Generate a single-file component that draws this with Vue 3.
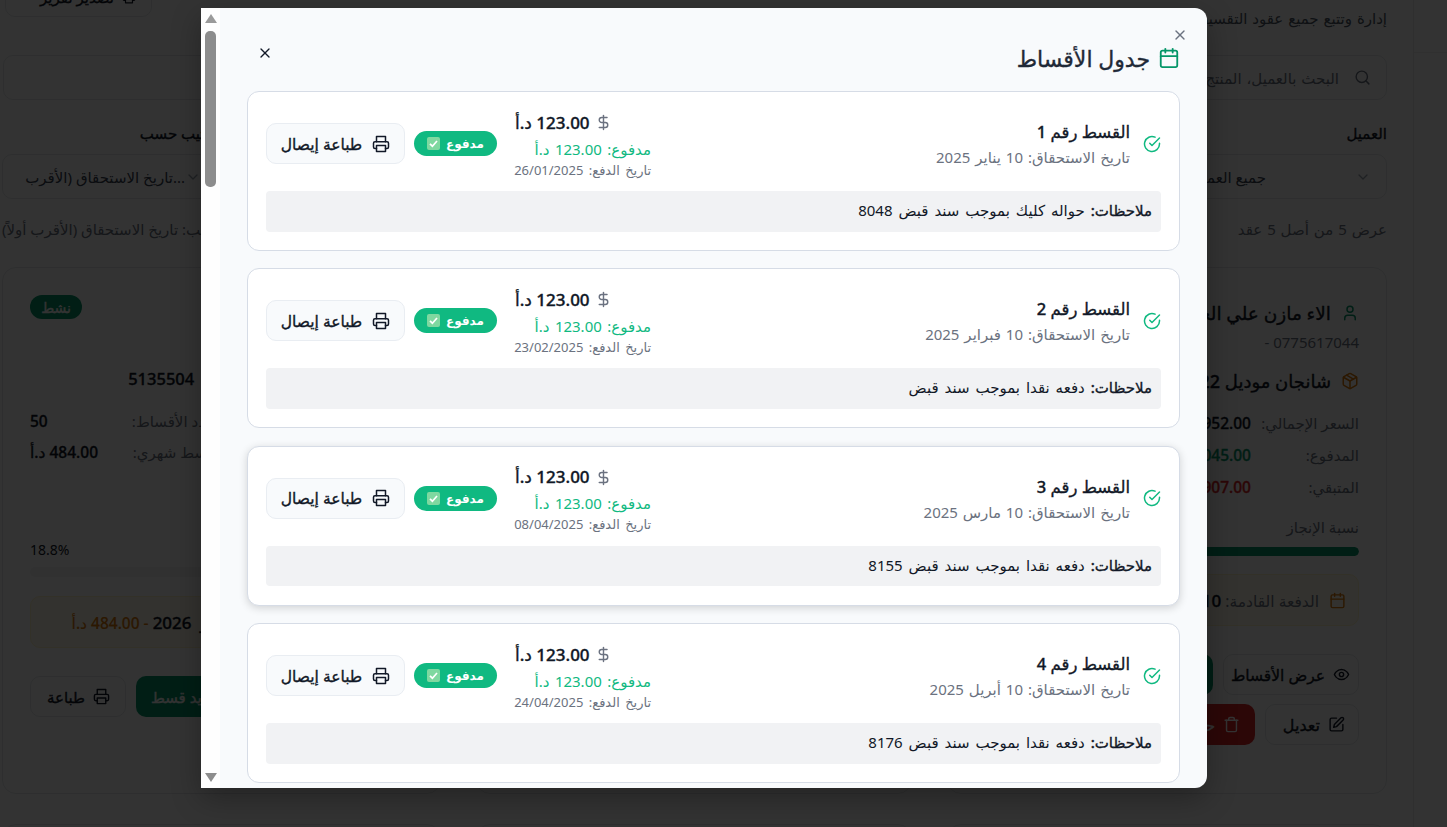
<script setup>
import { h } from 'vue'

const paths = {
  calendar: ['M8 2v4', 'M16 2v4', 'M5 4h14a2 2 0 0 1 2 2v14a2 2 0 0 1-2 2H5a2 2 0 0 1-2-2V6a2 2 0 0 1 2-2Z', 'M3 10h18'],
  check: ['M22 11.08V12a10 10 0 1 1-5.93-9.14', 'm9 11 3 3L22 4'],
  printer: ['M6 9V2h12v7', 'M6 18H4a2 2 0 0 1-2-2v-5a2 2 0 0 1 2-2h16a2 2 0 0 1 2 2v5a2 2 0 0 1-2 2h-2', 'M6 14h12v8H6Z'],
  x: ['M18 6 6 18', 'M6 6l12 12'],
  dollar: ['M12 2v20', 'M17 5H9.5a3.5 3.5 0 0 0 0 7h5a3.5 3.5 0 0 1 0 7H6'],
  search: ['M19 11a8 8 0 1 1-16 0 8 8 0 0 1 16 0Z', 'm21 21-4.3-4.3'],
  user: ['M19 21v-2a4 4 0 0 0-4-4H9a4 4 0 0 0-4 4v2', 'M16 7a4 4 0 1 1-8 0 4 4 0 0 1 8 0Z'],
  box: ['m7.5 4.27 9 5.15', 'M21 8a2 2 0 0 0-1-1.73l-7-4a2 2 0 0 0-2 0l-7 4A2 2 0 0 0 3 8v8a2 2 0 0 0 1 1.73l7 4a2 2 0 0 0 2 0l7-4A2 2 0 0 0 21 16Z', 'm3.3 7 8.7 5 8.7-5', 'M12 22V12'],
  eye: ['M2 12s3-7 10-7 10 7 10 7-3 7-10 7-10-7-10-7Z', 'M15 12a3 3 0 1 1-6 0 3 3 0 0 1 6 0Z'],
  edit: ['M12 3H5a2 2 0 0 0-2 2v14a2 2 0 0 0 2 2h14a2 2 0 0 0 2-2v-7', 'M18.375 2.625a2.121 2.121 0 1 1 3 3L12 15l-4 1 1-4Z'],
  trash: ['M3 6h18', 'M19 6v14c0 1-1 2-2 2H7c-1 0-2-1-2-2V6', 'M8 6V4c0-1 1-2 2-2h4c1 0 2 1 2 2v2'],
  chevron: ['m6 9 6 6 6-6'],
}
const Icon = (props) =>
  h('svg', {
    width: props.size || 16, height: props.size || 16, viewBox: '0 0 24 24', fill: 'none',
    stroke: 'currentColor', 'stroke-width': 2, 'stroke-linecap': 'round', 'stroke-linejoin': 'round',
    style: 'flex:none;display:block',
  }, paths[props.name].map((d) => h('path', { d })))
Icon.props = ['name', 'size']

const installments = [
  { n: 1, due: '10 يناير 2025', paidOn: '26/01/2025', note: 'حواله كليك بموجب سند قبض 8048' },
  { n: 2, due: '10 فبراير 2025', paidOn: '23/02/2025', note: 'دفعه نقدا بموجب سند قبض' },
  { n: 3, due: '10 مارس 2025', paidOn: '08/04/2025', note: 'دفعه نقدا بموجب سند قبض 8155', hover: true },
  { n: 4, due: '10 أبريل 2025', paidOn: '24/04/2025', note: 'دفعه نقدا بموجب سند قبض 8176' },
]
</script>

<template>
  <div class="app" dir="rtl">
    <aside class="rail"><div class="rail-head"></div></aside>
    <main class="page">
      <header class="top">
        <p class="sub">إدارة وتتبع جميع عقود التقسيط</p>
        <button class="ghost export"><Icon name="printer" :size="14" /> تصدير تقرير</button>
      </header>

      <section class="search">
        <Icon name="search" :size="17" />
        <span>البحث بالعميل، المنتج أو رقم العقد</span>
      </section>

      <section class="filters">
        <div class="filter">
          <label>العميل</label>
          <div class="select first"><Icon name="chevron" :size="16" /><span>جميع العملاء</span></div>
        </div>
        <div class="filter">
          <label>ترتيب حسب</label>
          <div class="select"><Icon name="chevron" :size="16" /><span>...تاريخ الاستحقاق (الأقرب</span></div>
        </div>
      </section>

      <div class="results">
        <span class="count">عرض 5 من أصل 5 عقد</span>
        <span>مرتب حسب: تاريخ الاستحقاق (الأقرب أولاً)</span>
      </div>

      <section class="grid">
        <article class="card">
          <div class="name"><Icon name="user" :size="18" class="green-i" /><span>الاء مازن علي الخطيب</span></div>
          <div class="phone">0775617044 - </div>
          <div class="name product"><Icon name="box" :size="18" class="amber-i" /><span>شانجان موديل 2022</span></div>
          <div class="col rcol">
            <div class="row"><span>السعر الإجمالي:</span><b>25,952.00 د.أ</b></div>
            <div class="row"><span>المدفوع:</span><b class="pos">10,045.00 د.أ</b></div>
            <div class="row"><span>المتبقي:</span><b class="neg">15,907.00 د.أ</b></div>
          </div>
          <div class="prog-label">نسبة الإنجاز</div>
          <div class="track"><div class="fill"></div></div>
          <div class="next tight"><Icon name="calendar" :size="17" class="amber-i" /><span>الدفعة القادمة: <b>10 فبراير 2026</b> <em>- 484.00 د.أ</em></span></div>
          <div class="btns">
            <button class="ghost b-view"><Icon name="eye" :size="17" /> عرض الأقساط</button>
            <button class="solid green">تسديد قسط</button>
          </div>
          <div class="btns second">
            <button class="ghost b-edit"><Icon name="edit" :size="17" /> تعديل</button>
            <button class="solid red"><Icon name="trash" :size="17" /> حذف</button>
          </div>
        </article>

        <article class="card"></article>

        <article class="card">
          <div class="status-row"><span class="status">نشط</span></div>
          <div class="col lcol">
            <div class="num"><span>رقم العقد:</span><b>5135504</b></div>
            <div class="row"><span>عدد الأقساط:</span><b>50</b></div>
            <div class="row"><span>قسط شهري:</span><b>484.00 د.أ</b></div>
          </div>
          <div class="pct"><span>نسبة الإنجاز</span><b>18.8%</b></div>
          <div class="track ltrack"><div class="fill short"></div></div>
          <div class="next lnext"><Icon name="calendar" :size="17" class="amber-i" /><span>الدفعة القادمة: <b>10 فبراير 2026</b> <em>- 484.00 د.أ</em></span></div>
          <div class="btns lbtns">
            <button class="solid green"><Icon name="dollar" :size="16" /> تسديد قسط</button>
            <button class="ghost b-print"><Icon name="printer" :size="17" /> طباعة</button>
          </div>
        </article>
      </section>

      <section class="grid next-row">
        <article class="card"></article>
        <article class="card"></article>
        <article class="card"></article>
      </section>
    </main>

    <div class="overlay" dir="ltr">
      <div class="modal" dir="rtl">
        <button class="close-main"><Icon name="x" :size="16" /></button>
        <div class="bar">
          <span class="arrow up"></span>
          <span class="thumb"></span>
          <span class="arrow down"></span>
        </div>

        <div class="m-head">
          <h2><Icon name="calendar" :size="22" class="title-i" /> جدول الأقساط</h2>
          <button class="close-x"><Icon name="x" :size="16" /></button>
        </div>

        <div class="list">
          <article v-for="it in installments" :key="it.n" class="inst" :class="{ hover: it.hover }">
            <div class="i-top">
              <div class="i-info">
                <Icon name="check" :size="18" class="ok-i" />
                <div class="i-text">
                  <div class="i-title">القسط رقم {{ it.n }}</div>
                  <div class="i-due">تاريخ الاستحقاق: {{ it.due }}</div>
                </div>
              </div>
              <div class="i-side">
                <div class="amount-block">
                  <div class="amount"><Icon name="dollar" :size="17" class="gray-i" /><b>123.00 د.أ</b></div>
                  <div class="paid">مدفوع: 123.00 د.أ</div>
                  <div class="paid-on">تاريخ الدفع: {{ it.paidOn }}</div>
                </div>
                <span class="badge">
                  مدفوع
                  <svg width="13" height="13" viewBox="0 0 13 13"><rect width="13" height="13" rx="2" fill="#7fd8a0" /><path d="M3 6.8 5.4 9.2 10 4" fill="none" stroke="#fff" stroke-width="1.7" /></svg>
                </span>
                <button class="print"><Icon name="printer" :size="18" /> طباعة إيصال</button>
              </div>
            </div>
            <div class="note"><b>ملاحظات:</b> {{ it.note }}</div>
          </article>
        </div>
      </div>
    </div>
  </div>
</template>

<style>
html, body { margin: 0; background: #fff; overflow: hidden; }
</style>

<style scoped>
.app {
  width: 1447px; height: 827px; overflow: hidden; position: relative; background: #fff; display: flex;
  font-family: "Noto Sans", "Open Sans", "DejaVu Sans", sans-serif; font-size: 15px; color: #111827;
}
button { font: inherit; color: inherit; }
b, em, .filter label, .name, .status, .ghost, .solid, h2, .i-title, .print {
  font-weight: 500; -webkit-text-stroke: 0.35px currentColor;
}
em { font-style: normal; color: #d97706; font-size: 15.5px; -webkit-text-stroke: 0.15px currentColor; }
.rail { width: 33px; flex: none; border-left: 1px solid #ececec; }
.rail-head { height: 52px; border-bottom: 1px solid #efefef; }
.page { width: 1385px; flex: none; margin-right: 26px; }
.top { display: flex; justify-content: space-between; align-items: flex-start; height: 55px; }
.sub { margin: 7px 0 0; color: #4b5563; line-height: 22px; word-spacing: 1px; white-space: nowrap; }
.export { margin: -24px 0 0 3px; width: 147px; height: 40px; padding: 0 22px; }
.search {
  height: 45px; box-sizing: border-box; border: 1px solid #e5e7eb; border-radius: 10px; background: #fff; margin-left: 1px;
  display: flex; align-items: center; gap: 15px; padding: 0 15px; color: #6b7280; word-spacing: 1px;
}
.filters { display: flex; justify-content: space-between; margin-top: 23px; }
.filter { width: 215px; }
.filter label { display: block; line-height: 20px; }
.select {
  margin-top: 11px; height: 45px; box-sizing: border-box; border: 1px solid #e5e7eb; border-radius: 10px;
  display: flex; align-items: center; gap: 0; padding: 0 15px 0 8px; color: #374151; white-space: nowrap;
}
.select svg { color: #9ca3af; }
.select.first span { margin-right: 89px; }
.results { display: flex; justify-content: space-between; color: #6b7280; margin-top: 19px; line-height: 22px; }
.count { word-spacing: 1px; }
.grid { display: grid; grid-template-columns: 440px 436px 439px; gap: 35px; margin-top: 27px; }
.next-row { margin-top: 30px; }
.card {
  height: 527px; box-sizing: border-box; border: 1px solid #e5e7eb; border-radius: 14px; background: #fff;
  padding: 27px; display: flex; flex-direction: column; min-width: 0;
}
.name { display: flex; align-items: center; gap: 10px; font-size: 18.5px; line-height: 26px; margin-top: 5px; white-space: nowrap; }
.product { margin-top: 14px; font-size: 18px; }
.phone { color: #6b7280; line-height: 24px; margin-top: 4px; }
.green-i { color: #059669; } .amber-i { color: #d97706; }
.col { display: flex; flex-direction: column; gap: 10px; }
.rcol { width: 198px; margin-top: 18px; }
.lcol { width: 185px; margin-top: 49px; align-self: flex-end; gap: 9px; }
.row { display: flex; justify-content: space-between; line-height: 22px; color: #6b7280; white-space: nowrap; }
.row b { color: #111827; font-size: 15.5px; }
.row b.pos { color: #059669; } .row b.neg { color: #dc2626; }
.num { display: flex; gap: 10px; margin: 0 -53px 11px 0; color: #6b7280; line-height: 22px; white-space: nowrap; }
.num b { color: #111827; font-size: 16.5px; }
.prog-label { margin-top: 18px; color: #6b7280; line-height: 22px; }
.track { height: 9px; border-radius: 5px; background: #f3f4f6; margin-top: 9px; overflow: hidden; }
.ltrack { height: 10px; margin-top: 6px; }
.fill { height: 100%; width: 100%; background: #059669; border-radius: 5px; }
.fill.short { width: 18.8%; }
.pct { display: flex; justify-content: space-between; margin-top: 76px; line-height: 22px; color: #6b7280; }
.pct b { color: #111827; font-weight: 400; font-size: 14px; -webkit-text-stroke: 0; }
.status-row { display: flex; justify-content: flex-end; }
.status {
  width: 52px; height: 24px; border-radius: 12px; background: #059669; color: #fff; font-size: 14px;
  display: flex; align-items: center; justify-content: center;
}
.next {
  margin-top: 19px; height: 52px; box-sizing: border-box; background: #fffbeb; border: 1px solid #fef3c7; border-radius: 10px;
  display: flex; align-items: center; gap: 10px; padding: 0 12px; color: #6b7280; white-space: nowrap; font-size: 15.5px;
}
.next b { color: #111827; font-size: 17px; }
.tight { margin-top: 18px; }
.lnext { gap: 16px; }
.lnext b { word-spacing: 4px; }
.btns { display: flex; gap: 10px; margin-top: 28px; }
.second { margin-top: 9px; }
.lbtns { justify-content: flex-end; }
.ghost, .solid {
  height: 41px; box-sizing: border-box; border-radius: 10px; display: flex; align-items: center; gap: 8px;
  padding: 0 15px; white-space: nowrap; cursor: pointer;
}
.ghost { background: #fff; border: 1px solid #e5e7eb; }
.solid { border: 0; color: #fff; }
.b-view { width: 136px; padding: 0 8px; font-size: 15.5px; }
.b-edit { width: 94px; padding: 0 13px; font-size: 16px; }
.b-print { width: 96px; padding: 0 15px; }
.green { background: #059669; }
.red { background: #dc2626; }
.overlay { position: absolute; inset: 0; background: rgba(0, 0, 0, 0.8); padding: 8px 0 0 201px; display: flex; align-items: flex-start; }
.modal {
  width: 1006px; height: 780px; box-sizing: border-box; position: relative; overflow: hidden; background: #f8fafc;
  border-radius: 0 12px 12px 0; padding: 0 27px 0 46px; box-shadow: 0 10px 30px rgba(0, 0, 0, 0.3); font-size: 15px;
}
.close-main { position: absolute; top: 19px; right: 19px; background: none; border: 0; padding: 0; color: #6b7280; -webkit-text-stroke: 0; }
.bar { position: absolute; left: 0; top: 0; bottom: 0; width: 19px; background: #fefefe; }
.thumb { position: absolute; left: 4px; top: 23px; width: 11px; height: 156px; background: #8d8d8d; border-radius: 5px; }
.arrow { position: absolute; left: 4px; width: 0; height: 0; border-left: 6px solid transparent; border-right: 6px solid transparent; }
.up { top: 6px; border-bottom: 9px solid #9a9a9a; }
.down { bottom: 6px; border-top: 9px solid #8d8d8d; }
.m-head { display: flex; justify-content: space-between; align-items: center; height: 83px; padding-top: 17px; padding-left: 10px; box-sizing: border-box; }
h2 { margin: 0; display: flex; align-items: center; gap: 8px; font-size: 22px; color: #1f2937; }
.title-i { color: #059669; }
.close-x { background: none; border: 0; padding: 0; color: #111827; margin-top: -10px; }
.list { display: flex; flex-direction: column; gap: 17.4px; }
.inst { height: 160px; box-sizing: border-box; background: #fff; border: 1px solid #d6dce6; border-radius: 12px; padding: 18px; }
.inst.hover { box-shadow: 0 2px 8px rgba(0, 0, 0, 0.16); }
.i-top { display: flex; justify-content: space-between; align-items: center; height: 67px; }
.i-info { display: flex; align-items: center; gap: 13px; }
.i-text { padding-top: 1px; }
.ok-i { color: #10b981; }
.gray-i { color: #6b7280; }
.i-title { font-size: 16.5px; line-height: 24px; }
.i-due { color: #6b7280; line-height: 22px; margin-top: 2px; word-spacing: 1px; }
.i-side { display: flex; align-items: center; gap: 18px; }
.amount-block { width: 136px; display: flex; flex-direction: column; padding-top: 2px; }
.amount { display: flex; align-items: center; justify-content: space-between; width: 97px; align-self: flex-end; font-size: 17px; line-height: 24px; white-space: nowrap; }
.paid { color: #10b981; line-height: 22px; margin-top: 3px; white-space: nowrap; word-spacing: 1.5px; }
.paid-on { color: #6b7280; font-size: 13px; line-height: 18px; margin-top: 1px; white-space: nowrap; word-spacing: 2px; }
.badge {
  width: 83px; height: 25px; box-sizing: border-box; border-radius: 13px; background: #10b981; color: #fff;
  display: flex; align-items: center; justify-content: center; gap: 6px; font-size: 12px; font-weight: 700;
}
.print {
  width: 139px; height: 41px; box-sizing: border-box; background: #f8fafc; border: 1px solid #e9edf2; border-radius: 10px; font-size: 15.5px;
  display: flex; align-items: center; justify-content: center; gap: 10px; padding: 0; margin-right: -9px; white-space: nowrap;
}
.note { margin-top: 14px; height: 40.5px; background: #f1f2f4; border-radius: 4px; padding: 0 9px; line-height: 39px; color: #111827; word-spacing: 2px; white-space: nowrap; }
</style>
